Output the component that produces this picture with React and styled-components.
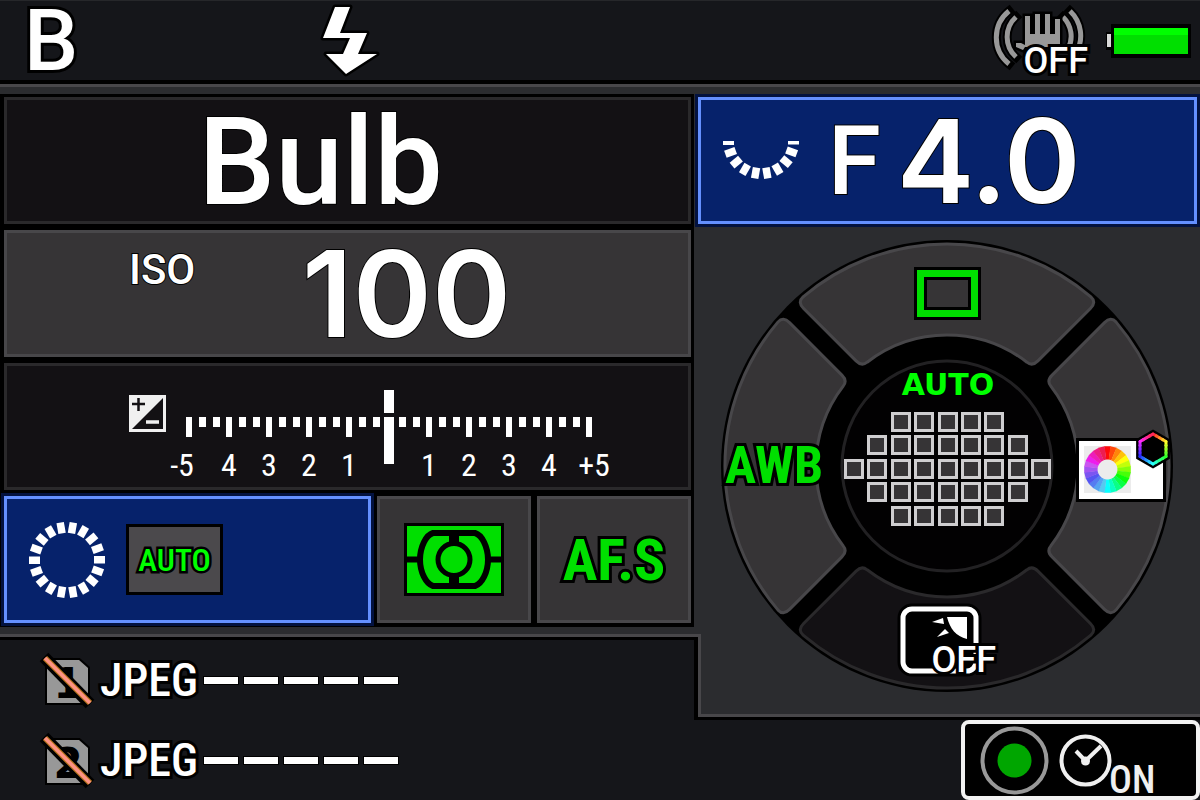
import React from "react";
import styled, { createGlobalStyle } from "styled-components";

const color = {
  body: "#2b2c2f",
  bar: "#15161a",
  edge: "#48474a",
  panel: "#363436",
  panelDark: "#131114",
  edgeDark: "#2a292b",
  blue: "#06226b",
  blueEdge: "#6490ff",
  navy: "#03123f",
  green: "#00df00",
  brightGreen: "#00ff00",
};

const font = {
  wide: `Roboto, "Liberation Sans", sans-serif`,
  digits: `Inter, Roboto, sans-serif`,
  narrow: `"Roboto Condensed", "Liberation Sans Narrow", "Liberation Sans", sans-serif`,
  extended: `"DejaVu Sans", sans-serif`,
};

const GlobalStyle = createGlobalStyle`
  body {
    margin: 0;
    background: ${color.bar};
    font-family: ${font.wide};
  }
  * {
    box-sizing: border-box;
  }
`;

const Screen = styled.main`
  display: flex;
  flex-direction: column;
  min-height: 100vh;
  background: ${color.bar};
  color: #fff;
`;

const Text = styled.span`
  font-family: ${(props) => font[props.$face || "wide"]};
  font-size: ${(props) => props.$size}px;
  font-weight: ${(props) => props.$weight || 500};
  line-height: ${(props) => (props.$leading ? `${props.$leading}px` : 1)};
  color: ${(props) => props.$color || "#fff"};
  white-space: nowrap;
  -webkit-text-stroke: ${(props) => props.$outline || 2}px #000;
  paint-order: stroke fill;
`;

const Icon = styled.svg`
  display: block;
  flex: none;
  overflow: visible;
`;

const Header = styled.header`
  display: grid;
  grid-template-columns: 27% 1fr auto auto;
  grid-template-rows: minmax(0, 1fr);
  align-items: center;
  height: 84px;
  padding-right: 9px;
  border-top: 1px solid #26272a;
  border-bottom: 4px solid #000;
`;

const Mode = styled.div`
  display: flex;
  padding-left: 24px;
`;

const Badge = styled.div`
  position: relative;
  display: flex;
`;

const BadgeText = styled.div`
  position: absolute;
  right: 0;
  bottom: -3px;
  display: flex;
`;

const Stabilizer = styled(Badge)`
  margin-right: 19px;
`;

const Body = styled.div`
  flex: 1;
  display: grid;
  grid-template-columns: minmax(0, 694fr) minmax(0, 506fr);
  grid-template-rows: auto 83px 1fr;
`;

const Settings = styled.section`
  grid-column: 1;
  grid-row: 1;
  padding: 7px 0;
  border-top: 3px solid ${color.edge};
  background: ${color.body};
`;

const PanelStack = styled.div`
  display: grid;
  grid-template-rows: repeat(4, 127px);
  gap: 6px;
  padding: 3px 3px 4px 4px;
  background: #000;
`;

const PanelRow = styled.div`
  display: grid;
  grid-template-columns: minmax(0, 367fr) minmax(0, 154fr) minmax(0, 154fr);
  gap: 6px;
`;

const Panel = styled.button`
  display: flex;
  align-items: center;
  justify-content: ${(props) => (props.$start ? "flex-start" : "center")};
  gap: ${(props) => props.$gap || 0}px;
  min-width: 0;
  margin: 0;
  padding: 0 0 0 ${(props) => props.$start || 0}px;
  border: 3px solid ${(props) => (props.$dark ? color.edgeDark : color.edge)};
  background: ${(props) => (props.$dark ? color.panelDark : color.panel)};
  color: inherit;
`;

const ActivePanel = styled(Panel)`
  border-color: ${color.blueEdge};
  background: ${color.blue};
  box-shadow: 0 0 0 3px ${color.navy};
`;

const ShutterPanel = styled(Panel)`
  padding: 4px 54px 0 0;
`;

const CompensationPanel = styled(Panel)`
  align-items: flex-start;
  padding-top: 24px;
`;

const AperturePanel = styled(ActivePanel)`
  height: 127px;
  margin: 3px 3px 2px 4px;
`;

const Aperture = styled.span`
  display: flex;
  align-items: center;
  gap: 16px;
`;

const IsoLabel = styled.span`
  display: flex;
  align-self: flex-start;
  width: 173px;
  padding-top: 16px;
`;

const AutoBox = styled.span`
  display: flex;
  align-items: center;
  justify-content: center;
  width: 97px;
  height: 71px;
  border: 3px solid #000;
  background: #4b494c;
`;

const Controls = styled.section`
  grid-column: 2;
  grid-row: 1 / 3;
  display: flex;
  flex-direction: column;
  padding-top: 7px;
  border-top: 3px solid ${color.edge};
  border-bottom: 3px solid ${color.edge};
  background: ${color.body};
`;

const Dial = styled.div`
  position: relative;
  display: grid;
  grid-template-columns: 106px 1fr 106px;
  grid-template-rows: 106px 1fr 106px;
  width: 452px;
  height: 452px;
  margin: 14px auto 0;
`;

const DialFace = styled(Icon)`
  position: absolute;
  inset: 0;
`;

const DialButton = styled.button`
  position: relative;
  grid-area: ${(props) => props.$area};
  display: flex;
  flex-direction: column;
  align-items: center;
  justify-content: center;
  gap: 12px;
  margin: 0;
  padding: 0 0 ${(props) => props.$lift || 0}px ${(props) => props.$start || 0}px;
  border: 0;
  background: none;
`;

// Closes the notch between the file list and the dial area.
const Notch = styled.div`
  grid-column: 1;
  grid-row: 2;
  margin-right: -7px;
  border-top: 3px solid ${color.edge};
  border-right: 3px solid ${color.edge};
  background: ${color.bar};
  box-shadow: inset -4px 3px 0 #000;
`;

const FileList = styled.ul`
  grid-column: 1;
  grid-row: 2 / 4;
  display: grid;
  grid-template-rows: 80px 80px;
  margin: 0;
  padding: 6px 0 0 42px;
  list-style: none;
`;

const FileRow = styled.li`
  display: flex;
  align-items: center;
`;

const FileType = styled.span`
  display: flex;
  width: 112px;
  padding-left: 8px;
`;

const Dashes = styled.span`
  display: flex;
  gap: 6px;
`;

const Dash = styled.i`
  width: 34px;
  height: 7px;
  background: #fff;
  box-shadow: 0 0 0 1px #000;
`;

const TimerBar = styled.section`
  grid-column: 2;
  grid-row: 3;
  display: flex;
  justify-content: flex-end;
  align-items: flex-start;
  border-top: 3px solid #000;
`;

const Timer = styled.button`
  display: flex;
  align-items: center;
  gap: 10px;
  width: 239px;
  height: 80px;
  margin: 0;
  padding: 0 0 0 15px;
  border: 4px solid #f2f2f2;
  border-radius: 8px;
  background: #000;
`;

const TimerState = styled.span`
  display: flex;
  align-self: flex-end;
  margin: 0 0 -3px -13px;
`;

const FlashIcon = () => (
  <Icon width="56" height="72" viewBox="0 0 56 72" aria-label="Flash">
    <path
      d="M13 2H28L18 28H45L36 49H55L24 69L4 49H21L28 33H1Z"
      fill="#fff"
      stroke="#000"
      strokeWidth="5"
      strokeLinejoin="round"
      paintOrder="stroke"
    />
  </Icon>
);

const shakeArcs =
  "M17 4A34 34 0 0 0 17 57M24 10A27 27 0 0 0 24 50M78 4A34 34 0 0 1 84 46M71 10A27 27 0 0 1 76 42";

const ShakeIcon = () => (
  <Icon width="96" height="70" viewBox="0 -1 96 70">
    <g fill="none" strokeLinecap="butt">
      <path d={shakeArcs} stroke="#000" strokeWidth="9" strokeLinecap="square" />
      <path d={shakeArcs} stroke="#989898" strokeWidth="5" />
    </g>
    <path
      d="M33 9H38V27H43V7H48V27H53V7H58V27H63V12H68V40H33L31 43L24 40V36H29L33 38Z"
      fill="#989898"
      stroke="#000"
      strokeWidth="5"
      paintOrder="stroke"
    />
  </Icon>
);

const BatteryIcon = () => (
  <Icon width="84" height="34" viewBox="0 0 84 34" aria-label="Battery full">
    <path d="M4 0H84V34H4V26H-1V8H4Z" fill="#000" />
    <path d="M0 10H4V23H0Z" fill="#d8d8d8" />
    <path d="M7 4H81V30H7Z" fill={color.green} />
    <path d="M7 4H81V11H7Z" fill={color.brightGreen} />
  </Icon>
);

const RingDashes = ({ angles }) =>
  angles.map((angle) => (
    <rect
      key={angle}
      x="27"
      y="-4"
      width="11"
      height="7.5"
      fill="#fff"
      transform={`rotate(${angle})`}
    />
  ));

const range = (count) => Array.from({ length: count }, (_, i) => i);

const HalfRing = styled(Icon)`
  overflow: hidden;
`;

const FrontDialIcon = () => (
  <HalfRing width="78" height="40" viewBox="-39 0 78 40">
    <RingDashes angles={range(10).map((i) => i * 20)} />
  </HalfRing>
);

const RearDialIcon = () => (
  <Icon width="78" height="78" viewBox="-39 -39 78 78">
    <RingDashes angles={range(18).map((i) => i * 20)} />
  </Icon>
);

const CompensationIcon = () => (
  <Icon width="37" height="42" viewBox="0 -5 37 42">
    <path d="M0 0H37V37H0Z" fill="#f0f0f0" />
    <path d="M34 3V34H3Z" fill="#131114" />
    <path d="M3 9H16M9.500 3V16" stroke="#131114" strokeWidth="2.500" />
    <path d="M17 27H30" stroke="#f0f0f0" strokeWidth="3.500" />
  </Icon>
);

const scaleLabels = [
  [16, "-5"],
  [63, "4"],
  [103, "3"],
  [143, "2"],
  [183, "1"],
  [263, "1"],
  [303, "2"],
  [343, "3"],
  [383, "4"],
  [428, "+5"],
];

const ScaleText = styled.text`
  font-family: ${font.narrow};
  font-size: 32px;
  fill: #fff;
  text-anchor: middle;
`;

const ExposureScale = () => (
  <Icon width="450" height="90" viewBox="0 0 450 90">
    <g fill="#fff">
      {range(31).map((i) => {
        const major = i % 3 === 0;
        return (
          i !== 15 && (
            <rect
              key={i}
              x={Math.round(23 + (i * 40) / 3) - 3}
              y="27"
              width={major ? 6 : 7}
              height={major ? 20 : 10}
            />
          )
        );
      })}
      <path d="M218 0H228V23H218ZM218 27H228V74H218Z" />
    </g>
    {scaleLabels.map(([x, label]) => (
      <ScaleText key={x} x={x} y="86">
        {label}
      </ScaleText>
    ))}
  </Icon>
);

const MeteringIcon = () => (
  <Icon width="100" height="73" viewBox="0 0 100 73" aria-label="Metering">
    <path d="M0 0H100V73H0Z" fill="#000" />
    <path d="M3 3H97V70H3Z" fill={color.green} />
    <path d="M0 36.500H16M84 36.500H100" stroke="#000" strokeWidth="6" />
    <path
      d="M29 10H71C78 12 84 24 84 36.500C84 49 78 61 71 63H29C22 61 16 49 16 36.500C16 24 22 12 29 10Z"
      fill="none"
      stroke="#000"
      strokeWidth="6"
    />
    <path d="M50 8V20M50 53V65" stroke="#000" strokeWidth="10" />
    <circle cx="50" cy="36.500" r="16" fill={color.green} stroke="#000" strokeWidth="5" />
  </Icon>
);

const CardIcon = ({ slot }) => (
  <Icon width="50" height="52" viewBox="0 0 50 52">
    <path
      d="M12 6H37L46 14V49H5V14Z"
      fill="#989898"
      stroke="#000"
      strokeWidth="4"
      paintOrder="stroke"
    />
    <CardNumber x="26" y="44">
      {slot}
    </CardNumber>
    <path d="M2 3L48 50" stroke="#000" strokeWidth="12" />
    <path d="M3 4L48 49" stroke="#b8741c" strokeWidth="6" />
    <path d="M3 4L48 49" stroke="#ff9284" strokeWidth="3.500" />
  </Icon>
);

const CardNumber = styled.text`
  font-family: ${font.extended};
  font-size: 42px;
  font-weight: 700;
  text-anchor: middle;
`;

const sectorPath =
  "M-143.900 -169.100A222 222 0 0 1 143.900 -169.100Q149.800 -163.900 143.400 -157.500L90.900 -105.100Q85.300 -99.400 79.900 -103.800A131 131 0 0 0 -79.900 -103.800Q-85.300 -99.400 -90.900 -105.100L-143.400 -157.500Q-149.800 -163.900 -143.900 -169.100Z";

const DialBackground = () => (
  <DialFace width="452" height="452" viewBox="-226 -226 452 452">
    <circle r="226" fill="#000" />
    {[0, 90, 180, 270].map((angle) => (
      <path
        key={angle}
        d={sectorPath}
        fill={angle === 180 ? color.panelDark : color.panel}
        stroke={angle === 180 ? color.edgeDark : color.edge}
        strokeWidth="3"
        transform={`rotate(${angle})`}
      />
    ))}
    <circle r="105" fill="#020102" stroke="#222123" strokeWidth="3" />
  </DialFace>
);

const SingleFrameIcon = () => (
  <Icon width="67" height="53" viewBox="0 0 67 53" aria-label="Single shot">
    <path d="M0 0H67V53H0Z" fill="#000" />
    <path d="M3 3H64V50H3Z" fill={color.green} />
    <path d="M10 10H57V43H10Z" fill="#000" />
    <path d="M13 13H54V40H13Z" fill={color.panel} />
  </Icon>
);

const afRows = [5, 7, 9, 7, 5];

const AfAreaIcon = () => (
  <Icon width="208" height="114" viewBox="0 0 208 114" shapeRendering="crispEdges">
    {afRows.map((count, row) =>
      range(count).map((i) => (
        <rect
          key={`${row}-${i}`}
          x={Math.round(((9 - count) / 2 + i) * 23.4) + 1.5}
          y={Math.round(row * 23.4) + 1.5}
          width="17"
          height="17"
          fill={color.panel}
          stroke="#cfced0"
          strokeWidth="3"
        />
      ))
    )}
  </Icon>
);

const wheelPoint = (radius, degrees) => {
  const rad = ((degrees - 90) * Math.PI) / 180;
  return `${radius * Math.cos(rad)} ${radius * Math.sin(rad)}`;
};

const ColorModeIcon = () => (
  <Icon width="94" height="72" viewBox="0 0 94 72" aria-label="Picture mode">
    <path d="M0 8H90V72H0Z" fill="#000" />
    <path d="M3 11H87V69H3Z" fill="#fff" />
    <path d="M8 16H55V63H8Z" fill="#ececec" />
    <g transform="translate(31.500 39.500)">
      {range(24).map((i) => (
        <path
          key={i}
          d={`M${wheelPoint(23.5, i * 15 - 8)}L${wheelPoint(23.5, i * 15 + 8)}L${wheelPoint(
            10,
            i * 15 + 8
          )}L${wheelPoint(10, i * 15 - 8)}Z`}
          fill={`hsl(${i * 15}, ${i > 12 ? 85 : 100}%, ${i > 12 && i < 20 ? 64 : 52}%)`}
        />
      ))}
    </g>
    <g transform="translate(77 19)">
      <path
        d={`M${range(6)
          .map((i) => wheelPoint(19.5, i * 60))
          .join("L")}Z`}
        fill="#000"
      />
      {range(24).map((i) => {
        const side = Math.floor(i / 4);
        const part = (i % 4) / 4;
        const at = (t) => {
          const [x1, y1] = wheelPoint(15, side * 60).split(" ").map(Number);
          const [x2, y2] = wheelPoint(15, side * 60 + 60).split(" ").map(Number);
          return `${x1 + (x2 - x1) * t} ${y1 + (y2 - y1) * t}`;
        };
        return (
          <path
            key={i}
            d={`M${at(part)}L${at(part + 0.25)}`}
            stroke={`hsl(${i * 15}, 100%, 58%)`}
            strokeWidth="3"
            strokeLinecap="round"
          />
        );
      })}
    </g>
  </Icon>
);

const FaceOffIcon = () => (
  <Icon width="98" height="71" viewBox="0 0 98 71">
    <rect x="5" y="5" width="73" height="62" rx="9" stroke="#000" strokeWidth="11" />
    <rect x="5" y="5" width="73" height="62" rx="9" stroke="#fff" strokeWidth="5" />
    <path d="M49 13H69V35C58 32 52 25 49 13ZM34 18L45 14L46 20ZM39 33L47 25L51 29Z" fill="#fff" />
  </Icon>
);

const LampIcon = () => (
  <Icon width="69" height="69" viewBox="0 0 69 69">
    <circle cx="34.500" cy="34.500" r="32" fill="#000" stroke="#989898" strokeWidth="4" />
    <circle cx="34.500" cy="34.500" r="17" fill="#00a600" />
  </Icon>
);

const ClockIcon = () => (
  <Icon width="53" height="53" viewBox="0 0 53 53">
    <g fill="none" stroke="#f0f0f0">
      <circle cx="26.500" cy="26.500" r="24" strokeWidth="4" />
      <path d="M17 17L26.500 27L42 12" strokeWidth="4" />
    </g>
    <circle cx="26.500" cy="27" r="4.500" fill="#f0f0f0" />
  </Icon>
);

const FileItem = ({ slot }) => (
  <FileRow>
    <CardIcon slot={slot} />
    <FileType>
      <Text $face="narrow" $size={46} $outline={6}>
        JPEG
      </Text>
    </FileType>
    <Dashes>
      {range(5).map((i) => (
        <Dash key={i} />
      ))}
    </Dashes>
  </FileRow>
);

const App = () => (
  <>
    <GlobalStyle />
    <Screen>
      <Header>
        <Mode>
          <Text $size={86} $leading={72} $outline={6}>
            B
          </Text>
        </Mode>
        <FlashIcon />
        <Stabilizer>
          <ShakeIcon />
          <BadgeText>
            <Text $size={36} $outline={6}>
              OFF
            </Text>
          </BadgeText>
        </Stabilizer>
        <BatteryIcon />
      </Header>

      <Body>
        <Settings>
          <PanelStack>
            <ShutterPanel $dark>
              <Text $size={122}>Bulb</Text>
            </ShutterPanel>
            <Panel $start={122}>
              <IsoLabel>
                <Text $size={42}>ISO</Text>
              </IsoLabel>
              <Text $face="digits" $size={120} $weight={600}>
                100
              </Text>
            </Panel>
            <CompensationPanel $dark $start={122}>
              <CompensationIcon />
              <ExposureScale />
            </CompensationPanel>
            <PanelRow>
              <ActivePanel $start={21} $gap={20}>
                <RearDialIcon />
                <AutoBox>
                  <Text $face="narrow" $size={32} $color={color.brightGreen} $outline={5}>
                    AUTO
                  </Text>
                </AutoBox>
              </ActivePanel>
              <Panel>
                <MeteringIcon />
              </Panel>
              <Panel>
                <Text $face="narrow" $size={58} $weight={700} $color={color.green} $outline={6}>
                  AF.S
                </Text>
              </Panel>
            </PanelRow>
          </PanelStack>
        </Settings>

        <Controls>
          <AperturePanel $start={21} $gap={28}>
            <FrontDialIcon />
            <Aperture>
              <Text $size={96}>F</Text>
              <Text $face="digits" $size={116} $weight={600}>
                4.0
              </Text>
            </Aperture>
          </AperturePanel>
          <Dial>
            <DialBackground />
            <DialButton $area="1 / 2">
              <SingleFrameIcon />
            </DialButton>
            <DialButton $area="2 / 1">
              <Text $face="narrow" $size={52} $weight={700} $color={color.green} $outline={6}>
                AWB
              </Text>
            </DialButton>
            <DialButton $area="2 / 2" $lift={36} $start={2}>
              <Text $face="extended" $size={30} $weight={700} $color={color.brightGreen}>
                AUTO
              </Text>
              <AfAreaIcon />
            </DialButton>
            <DialButton $area="2 / 3" $start={6}>
              <ColorModeIcon />
            </DialButton>
            <DialButton $area="3 / 2">
              <Badge>
                <FaceOffIcon />
                <BadgeText>
                  <Text $size={36} $outline={6}>
                    OFF
                  </Text>
                </BadgeText>
              </Badge>
            </DialButton>
          </Dial>
        </Controls>

        <Notch />
        <FileList>
          <FileItem slot="1" />
          <FileItem slot="2" />
        </FileList>

        <TimerBar>
          <Timer>
            <LampIcon />
            <ClockIcon />
            <TimerState>
              <Text $face="narrow" $size={38} $color="#f0f0f0">
                ON
              </Text>
            </TimerState>
          </Timer>
        </TimerBar>
      </Body>
    </Screen>
  </>
);

export default App;
